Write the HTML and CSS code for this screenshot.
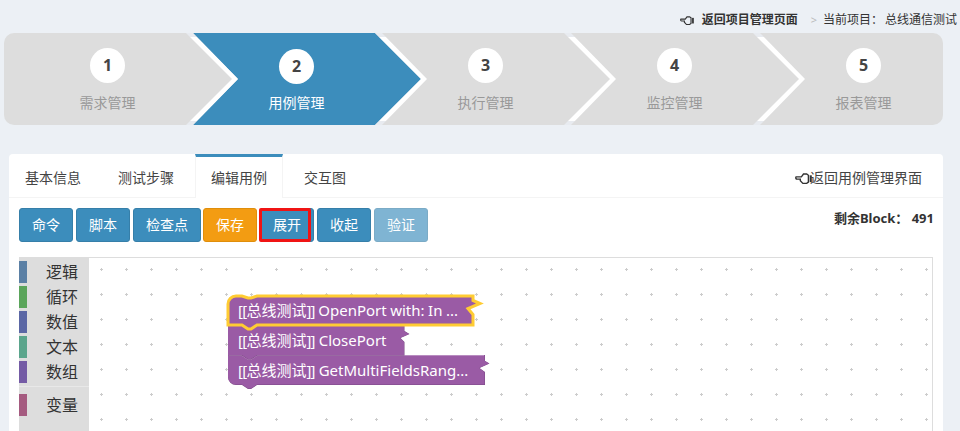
FILE: index.html
```html
<!DOCTYPE html>
<html lang="zh">
<head>
<meta charset="utf-8">
<title>编辑用例</title>
<link rel="stylesheet" href="styles.css">
</head>
<body>
<header class="topbar">
  <svg class="hand" viewBox="0 0 16 12"><path d="M1 4.5H6L8 1.8H11L12.6 3V9.400L11 10.600H7.400L5 8V6.600H2C.8 6.600.4 5.400 1 4.500Z"/><rect class="cuff" x="13.800" y="3" width="2" height="6.400"/></svg>
  <a class="back">返回项目管理页面</a>
  <span class="crumb-sep">&gt;</span>
  <span>当前项目：</span>
  <span class="project">总线通信测试</span>
</header>

<nav class="steps">
  <div class="step"><span class="num">1</span><span class="label">需求管理</span></div>
  <div class="step step-active"><span class="num">2</span><span class="label">用例管理</span></div>
  <div class="step"><span class="num">3</span><span class="label">执行管理</span></div>
  <div class="step"><span class="num">4</span><span class="label">监控管理</span></div>
  <div class="step"><span class="num">5</span><span class="label">报表管理</span></div>
</nav>

<main class="card">
  <div class="tabs">
    <a class="tab">基本信息</a>
    <a class="tab">测试步骤</a>
    <a class="tab tab-active">编辑用例</a>
    <a class="tab tab-short">交互图</a>
    <a class="tab-back">
      <svg class="hand hand-lg" viewBox="0 0 16 12"><path d="M1 4.5H6L8 1.8H11L12.6 3V9.400L11 10.600H7.400L5 8V6.600H2C.8 6.600.4 5.400 1 4.500Z"/><rect class="cuff" x="13.800" y="3" width="2" height="6.400"/></svg>返回用例管理界面
    </a>
  </div>

  <div class="toolbar">
    <div class="buttons">
      <button class="btn">命令</button>
      <button class="btn">脚本</button>
      <button class="btn">检查点</button>
      <button class="btn btn-save">保存</button>
      <button class="btn btn-marked">展开</button>
      <button class="btn">收起</button>
      <button class="btn btn-disabled">验证</button>
    </div>
    <div class="remain">剩余Block： 491</div>
  </div>

  <div class="workspace">
    <aside class="toolbox">
      <div class="cat"><i class="swatch c-logic"></i><span>逻辑</span></div>
      <div class="cat"><i class="swatch c-loop"></i><span>循环</span></div>
      <div class="cat"><i class="swatch c-math"></i><span>数值</span></div>
      <div class="cat"><i class="swatch c-text"></i><span>文本</span></div>
      <div class="cat"><i class="swatch c-list"></i><span>数组</span></div>
      <div class="sep"></div>
      <div class="cat"><i class="swatch c-var"></i><span>变量</span></div>
    </aside>
    <div class="canvas">
      <svg class="blocks" xmlns="http://www.w3.org/2000/svg">
        <defs>
          <pattern id="grid" patternUnits="userSpaceOnUse" width="25" height="25" x="11" y="10">
            <path d="M0 1.5H3M1.5 0V3" stroke="#ccc" stroke-width="1"/>
          </pattern>
        </defs>
        <rect width="100%" height="100%" fill="url(#grid)"/>
        <g transform="translate(-89 -258)">
          <path class="b-dark" d="M228 355H242l6 4h3l6-4H485V361L489.500 363.500 479.500 368 485 372V385H257l-6 4h-3l-6-4H236a8 8 0 0 1-8-8Z"/>
          <path class="b-fill" d="M228 355H242l6 4h3l6-4H484.500V360.500L489 363.500 479 368 484.500 372V384.500H257l-6 4h-3l-6-4H236a8 8 0 0 1-8-8Z"/>
          <path class="b-light" d="M228.500 355.500H242l6 4h3l6-4H484"/>
          <text class="b-text" x="238" y="376"><tspan class="b-br">[[</tspan>总线测试<tspan class="b-br">]]</tspan> GetMultiFieldsRang...</text>

          <path class="b-dark" d="M228 325H242l6 4h3l6-4H404.500V331L409.500 334 400.500 338 404.500 342V355.500H257l-6 4h-3l-6-4H228Z"/>
          <path class="b-fill" d="M228 325H242l6 4h3l6-4H404V331L409 334 400 338 404 342V355H257l-6 4h-3l-6-4H228Z"/>
          <text class="b-text" x="238" y="346"><tspan class="b-br">[[</tspan>总线测试<tspan class="b-br">]]</tspan> ClosePort</text>

          <path class="b-fill b-selected" d="M228 304a8 8 0 0 1 8-8h6l6 2h3l6-2H473V300.500L480 303.500 468 308.500 473 314.500V325H257l-6 4h-3l-6-4H228Z"/>
          <text class="b-text b-tight" x="238" y="316"><tspan class="b-br">[[</tspan>总线测试<tspan class="b-br">]]</tspan> OpenPort with: In ...</text>
        </g>
      </svg>
    </div>
  </div>
</main>
</body>
</html>
```

FILE: styles.css
```css
* { box-sizing: border-box; }

html, body {
  height: 431px;
  overflow: hidden;
}

body {
  margin: 0;
  background: #ecf0f5;
  color: #333;
  font: 14px/20px "Noto Sans", "Noto Sans CJK SC", sans-serif;
}

.topbar {
  height: 33px;
  padding: 7px 3px 0 0;
  display: flex;
  justify-content: flex-end;
  align-items: center;
  font-size: 12px;
  line-height: 20px;
  color: #333;
}

.hand {
  width: 14px;
  height: 11px;
  margin-right: 8px;
  overflow: visible;
}
.hand path { fill: none; stroke: #333; stroke-width: 1.3; }
.hand .cuff { fill: #333; }
.hand-lg { width: 17px; height: 13px; margin-right: -2px; vertical-align: -2px; }

.back { font-weight: 700; }
.crumb-sep { margin: 0 6px 0 13px; color: #bbb; font-size: 11px; }
.project { margin-left: 2px; }

.steps {
  display: flex;
  width: 939px;
  height: 92px;
  margin-left: 4px;
  padding-left: 9px;
  background: #ddd;
  border-radius: 10px;
  overflow: hidden;
}

.step {
  position: relative;
  flex: 0 0 189px;
  display: flex;
  flex-direction: column;
  align-items: center;
  padding-top: 15px;
  color: #999;
}

.step + .step::after {
  content: "";
  position: absolute;
  top: 0;
  left: -16px;
  width: 52px;
  height: 92px;
  background: linear-gradient(#e8ebf0 4px, #fff 4px, #fff 88px, #e8ebf0 88px);
  clip-path: polygon(0 0, 7px 0, 52px 46px, 7px 92px, 0 92px, 46px 46px);
}

.step-active::before {
  content: "";
  position: absolute;
  top: 0;
  left: -9px;
  width: 228px;
  height: 92px;
  background: #3c8dbc;
  clip-path: polygon(0 0, 182px 0, 228px 46px, 182px 92px, 0 92px, 45px 46px);
}

.num, .label { position: relative; z-index: 1; }

.num {
  width: 35px;
  height: 35px;
  border-radius: 50%;
  background: #fff;
  color: #444;
  font-weight: 700;
  font-size: 16px;
  line-height: 35px;
  text-align: center;
}

.label { margin-top: 10px; line-height: 20px; }

.step-active .num { margin-top: 1px; }
.step-active .label { margin-top: 9px; color: #fff; }

.card {
  width: 934px;
  height: 290px;
  margin: 29px 0 0 9px;
  background: #fff;
  border-radius: 4px 4px 0 0;
}

.tabs {
  display: flex;
  gap: 5px;
  height: 44px;
  border-bottom: 1px solid #f4f4f4;
}

.tab {
  width: 88px;
  height: 44px;
  padding-top: 14px;
  text-align: center;
  color: #444;
}
.tab-short { width: 74px; }

.tab-active {
  border-top: 3px solid #3c8dbc;
  border-left: 1px solid #f4f4f4;
  border-right: 1px solid #f4f4f4;
  padding-top: 11px;
  background: #fff;
}

.tab-back {
  margin-left: auto;
  padding: 14px 21px 0 0;
  color: #444;
  white-space: nowrap;
}

.toolbar {
  display: flex;
  justify-content: space-between;
  padding: 10px 9px 0 10px;
  height: 59px;
}

.buttons { display: flex; gap: 3px; align-items: flex-start; }

.btn {
  position: relative;
  min-width: 54px;
  height: 34px;
  padding: 0 12px;
  border: 1px solid #367fa9;
  border-radius: 3px;
  background: #3c8dbc;
  color: #fff;
  font: inherit;
}

.btn-save {
  margin-left: -1px;
  background: #f39c12;
  border-color: #e08e0b;
}

.btn-marked::after {
  content: "";
  position: absolute;
  top: -1px;
  bottom: -1px;
  left: -2px;
  right: 2px;
  border: 3px solid #f01414;
  border-radius: 2px;
}

.btn-disabled { opacity: .65; }

.remain {
  font-size: 13px;
  font-weight: 700;
  line-height: 20px;
  color: #333;
}

.workspace {
  display: flex;
  width: 914px;
  height: 190px;
  margin-left: 10px;
  border-top: 1px solid #ddd;
  border-right: 1px solid #ddd;
}

.toolbox {
  flex: 0 0 70px;
  background: #ddd;
  padding-top: 3px;
  color: #333;
  font-size: 16px;
}

.cat {
  display: flex;
  align-items: center;
  gap: 19px;
  height: 22px;
  margin-bottom: 3px;
}

.swatch { width: 8px; height: 22px; }
.c-logic { background: #5b80a5; }
.c-loop { background: #5ba55b; }
.c-math { background: #5b67a5; }
.c-text { background: #5ba58c; }
.c-list { background: #745ba5; }
.c-var { background: #a55b80; }

.sep {
  height: 1px;
  margin: 2px 0 7px;
  background: #e8e8e8;
}

.canvas { flex: 1; position: relative; }

.blocks {
  position: absolute;
  inset: 0;
  width: 100%;
  height: 100%;
}

.b-fill { fill: #9a5ba5; }
.b-dark { fill: #7b4984; }
.b-light { fill: none; stroke: #b88cc0; stroke-width: 1; }
.b-selected { stroke: #fc3; stroke-width: 3; }

.b-text {
  fill: #fff;
  font-size: 15px;
  font-family: "Noto Sans", "Noto Sans CJK SC", sans-serif;
}
.b-br { letter-spacing: -.75px; }
.b-tight { word-spacing: -.4px; }
```
